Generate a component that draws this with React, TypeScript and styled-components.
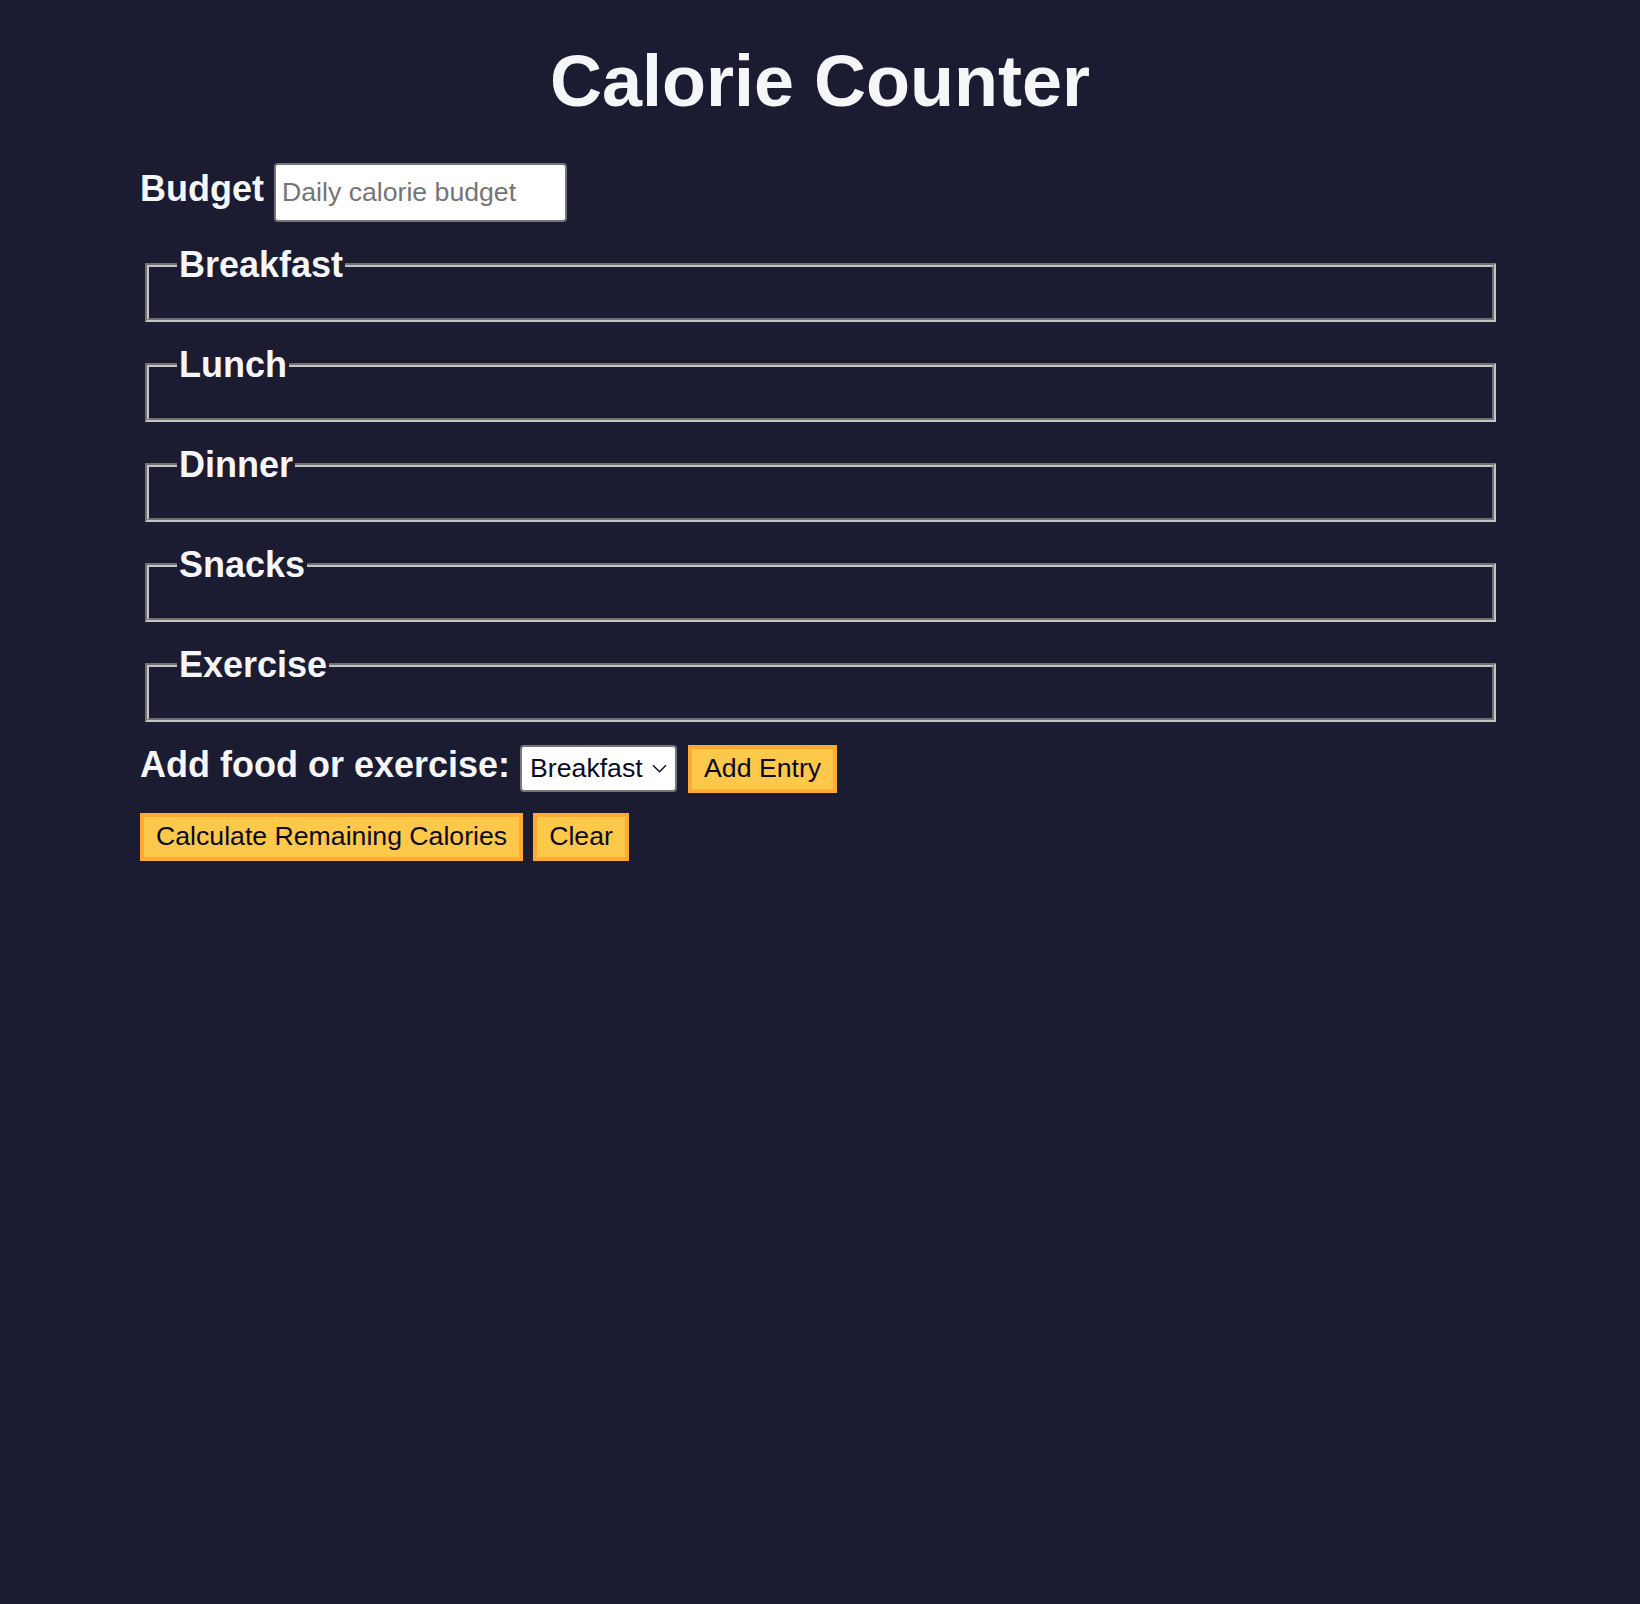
import React from "react";
import styled, { createGlobalStyle } from "styled-components";

const GlobalStyle = createGlobalStyle`
  html, body {
    margin: 0;
    padding: 0;
    background: #1b1b32;
    color: #f5f6f7;
    font-family: "Liberation Sans", Arial, Helvetica, sans-serif;
  }
  * { box-sizing: border-box; }
`;

const Page = styled.div`
  min-height: 1604px;
  padding-top: 40px;
`;

const Title = styled.h1`
  margin: 0 0 40px;
  font-size: 72px;
  line-height: 83px;
  font-weight: 700;
  text-align: center;
  color: #f5f6f7;
`;

const Main = styled.main`
  width: 1360px;
  margin: 0 auto;
  display: flex;
  flex-direction: column;
  gap: 22px;
`;

const Row = styled.div<{ $gap?: number }>`
  display: flex;
  align-items: baseline;
  gap: ${(p) => p.$gap ?? 10}px;
`;

const Label = styled.label`
  font-size: 36px;
  font-weight: 700;
  line-height: 41px;
  color: #f5f6f7;
`;

const TextInput = styled.input`
  width: 293px;
  height: 59px;
  padding: 0 6px;
  border: 2px solid #767676;
  border-radius: 4px;
  background: #ffffff;
  font-family: inherit;
  font-size: 26.67px;
  color: #000;
  &::placeholder {
    color: #757575;
  }
`;

const Fieldset = styled.fieldset`
  margin: 0 4px 0 5px;
  padding: 0 28px 33px;
  border: 4px groove #c4c4c4;
  min-width: 0;
`;

const Legend = styled.legend`
  padding: 0 2px;
  font-size: 36px;
  font-weight: 700;
  line-height: 41px;
  color: #f5f6f7;
`;

const Controls = styled.div`
  display: flex;
  flex-direction: column;
  gap: 20px;
`;

const SelectWrap = styled.span`
  position: relative;
  display: inline-block;
  margin-right: 1px;
`;

const Select = styled.select`
  appearance: none;
  -webkit-appearance: none;
  width: 157px;
  height: 47px;
  padding: 0 30px 0 8px;
  border: 2px solid #767676;
  border-radius: 4px;
  background: #ffffff;
  color: #0a0a23;
  font-family: inherit;
  font-size: 26.67px;
`;

const Chevron = styled.svg`
  position: absolute;
  right: 10px;
  top: 19px;
  width: 15px;
  height: 9px;
  pointer-events: none;
`;

const Button = styled.button`
  height: 48px;
  padding: 0 12px;
  border: 4px solid #ffaa30;
  background: #fec84a;
  color: #0a0a23;
  font-family: inherit;
  font-size: 26.67px;
  border-radius: 0;
  cursor: pointer;
`;

const meals = ["Breakfast", "Lunch", "Dinner", "Snacks", "Exercise"];

export default function App() {
  return (
    <>
      <GlobalStyle />
      <Page>
        <Title>Calorie Counter</Title>
        <Main>
          <Row>
            <Label htmlFor="budget">Budget</Label>
            <TextInput id="budget" type="number" placeholder="Daily calorie budget" />
          </Row>
          {meals.map((m) => (
            <Fieldset key={m}>
              <Legend>{m}</Legend>
            </Fieldset>
          ))}
          <Controls>
            <Row>
              <Label htmlFor="entry-dropdown">Add food or exercise:</Label>
              <SelectWrap>
                <Select id="entry-dropdown" defaultValue="breakfast">
                  {meals.map((m) => (
                    <option key={m} value={m.toLowerCase()}>
                      {m}
                    </option>
                  ))}
                </Select>
                <Chevron viewBox="0 0 15 9" fill="none">
                  <path d="M1 1.2 L7.5 7.7 L14 1.2" stroke="#0a0a23" strokeWidth="1.4" />
                </Chevron>
              </SelectWrap>
              <Button type="button">Add Entry</Button>
            </Row>
            <Row>
              <Button type="submit">Calculate Remaining Calories</Button>
              <Button type="button">Clear</Button>
            </Row>
          </Controls>
        </Main>
      </Page>
    </>
  );
}
